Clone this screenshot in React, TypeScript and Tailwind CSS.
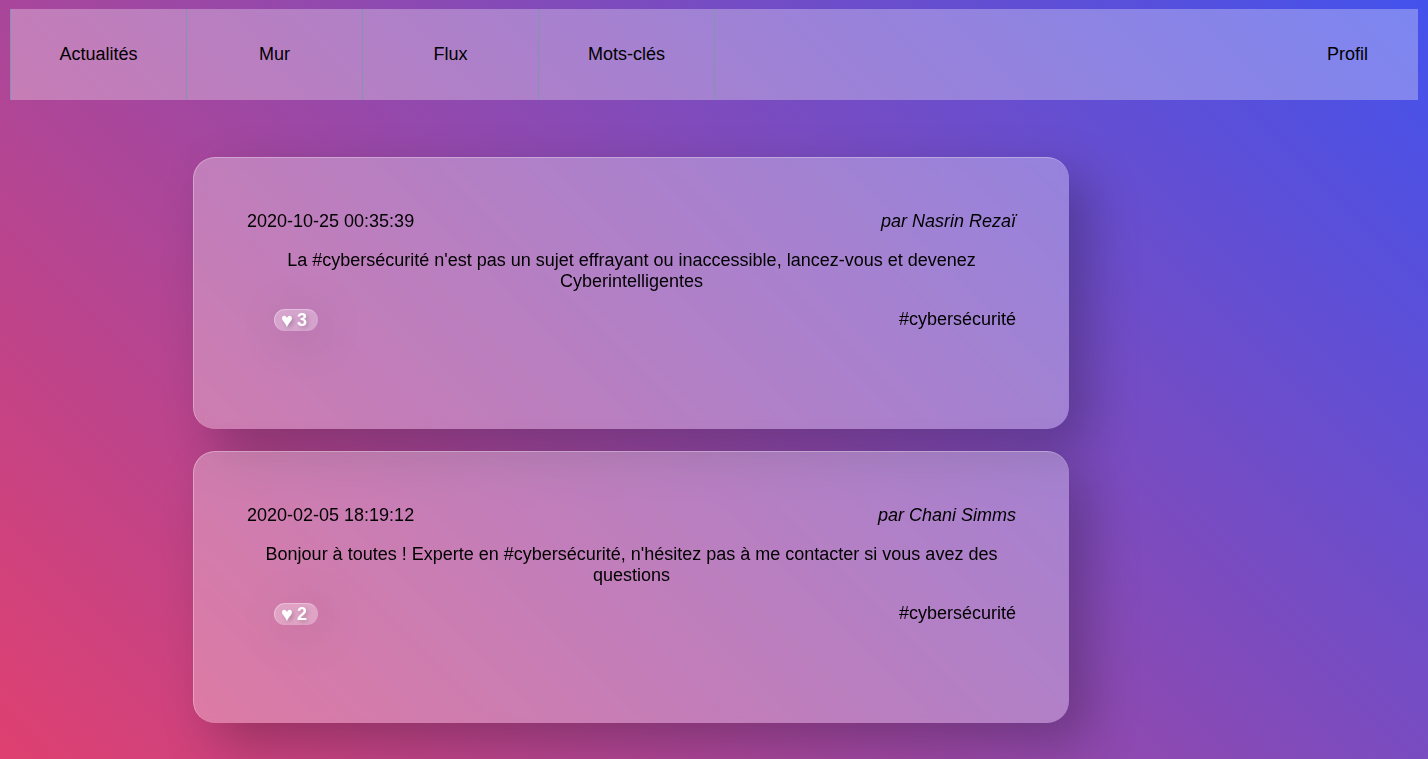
type Post = {
  id: number;
  date: string;
  author: string;
  message: string;
  likes: number;
  tag: string;
};

const links = ["Actualités", "Mur", "Flux", "Mots-clés"];

const posts: Post[] = [
  {
    id: 1,
    date: "2020-10-25 00:35:39",
    author: "Nasrin Rezaï",
    message:
      "La #cybersécurité n'est pas un sujet effrayant ou inaccessible, lancez-vous et devenez Cyberintelligentes",
    likes: 3,
    tag: "#cybersécurité",
  },
  {
    id: 2,
    date: "2020-02-05 18:19:12",
    author: "Chani Simms",
    message:
      "Bonjour à toutes ! Experte en #cybersécurité, n'hésitez pas à me contacter si vous avez des questions",
    likes: 2,
    tag: "#cybersécurité",
  },
];

function NavBar() {
  return (
    <nav className="mx-[10px] flex h-[91px] bg-white/30">
      {links.map((label) => (
        <a
          key={label}
          href="#"
          className="flex w-[176px] items-center justify-center border-l border-[#8394b0]"
        >
          {label}
        </a>
      ))}
      <div className="flex grow justify-end border-l border-[#8394b0]">
        <a href="#" className="flex items-center px-[50px]">
          Profil
        </a>
      </div>
    </nav>
  );
}

function PostCard({ post }: { post: Post }) {
  return (
    <article className="rounded-[22px] border-t border-l border-white/30 bg-white/30 px-[53px] pt-[53px] pb-[98px] shadow-[20px_20px_50px_rgba(0,0,0,0.25)] backdrop-blur-[5px]">
      <header className="flex justify-between">
        <time>{post.date}</time>
        <em>par {post.author}</em>
      </header>
      <p className="mt-[18px] text-center">{post.message}</p>
      <footer className="mt-[17px] flex items-start justify-between">
        <button
          type="button"
          aria-label={`J'aime ${post.likes}`}
          className="ml-[27px] flex h-[22px] w-[44px] items-center gap-1 rounded-full border-t border-l border-white/30 bg-white/30 pl-1.5 font-bold text-white shadow-[6px_6px_50px_rgba(0,0,0,0.15)] [text-shadow:2px_2px_4px_rgba(0,0,0,0.2)]"
        >
          <span className="text-[20px]">♥</span>
          <span>{post.likes}</span>
        </button>
        <a href="#">{post.tag}</a>
      </footer>
    </article>
  );
}

export default function App() {
  return (
    <div className="min-h-screen bg-[linear-gradient(45deg,#df4070,#4352ec)] pt-[9px] pb-9 font-['Liberation_Sans',Arial,sans-serif] text-[18px] leading-[21px] text-black">
      <NavBar />
      <main className="mt-[57px] grid grid-cols-[193fr_876fr_359fr]">
        <section className="col-start-2 flex flex-col gap-[22px]">
          {posts.map((post) => (
            <PostCard key={post.id} post={post} />
          ))}
        </section>
      </main>
    </div>
  );
}
